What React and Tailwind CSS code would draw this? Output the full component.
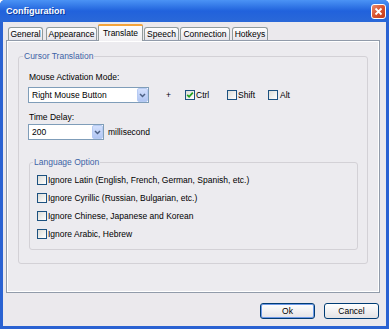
import React from 'react';

const Checkbox = ({ checked }) => (
  <span className="w-[10px] h-[10px] border border-[#1c5180] bg-gradient-to-br from-[#dcdcd7] to-white flex items-center justify-center shrink-0">
    {checked && (
      <svg width="8" height="8" viewBox="0 0 8 8">
        <path d="M1.2 3.8 L3.1 5.8 L6.8 1.6" stroke="#21a121" strokeWidth="1.7" fill="none" />
      </svg>
    )}
  </span>
);

const DropArrow = () => (
  <span className="w-[11px] h-[14px] rounded-[2px] border border-[#b7cbf3] bg-gradient-to-b from-[#d3e0fd] to-[#b1c6f3] flex items-center justify-center shrink-0">
    <svg width="7" height="5" viewBox="0 0 7 5">
      <path d="M1 1 L3.5 3.5 L6 1" stroke="#4d6185" strokeWidth="1.5" fill="none" />
    </svg>
  </span>
);

const Tab = ({ label, className }) => (
  <div className={`h-[13px] border border-b-0 border-[#919b9c] rounded-t-[3px] bg-gradient-to-b from-white to-[#e6e4ea] flex items-center justify-center ${className}`}>
    {label}
  </div>
);

const LangRow = ({ label }) => (
  <div className="h-[18px] flex items-center">
    <Checkbox />
    <span className="ml-[1px]">{label}</span>
  </div>
);

export default function App() {
  return (
    <div className="w-[389px] h-[329px] bg-[#2a62d2] rounded-t-[5px] flex flex-col font-['Liberation_Sans',Arial,sans-serif] text-[8.5px] leading-[12px] text-black overflow-hidden">
      {/* Title bar */}
      <div className="h-[22px] shrink-0 bg-gradient-to-b from-[#4b93f5] via-[#2162dc] to-[#2a68d8] flex items-center justify-between pl-[6px] pr-[3px]">
        <span className="text-white font-bold text-[9px] [text-shadow:1px_1px_0_#0b3a9c]">Configuration</span>
        <div className="w-[15px] h-[15px] rounded-[3px] border border-white bg-gradient-to-br from-[#ec8a6c] via-[#d8532f] to-[#c23a1b] flex items-center justify-center">
          <svg width="9" height="9" viewBox="0 0 9 9">
            <path d="M1.5 1.5 L7.5 7.5 M7.5 1.5 L1.5 7.5" stroke="white" strokeWidth="1.8" />
          </svg>
        </div>
      </div>

      {/* Body */}
      <div className="mx-[3px] mb-[3px] flex-1 bg-[#ebe9ed] flex flex-col pt-[2px]">
        {/* Tabs */}
        <div className="h-[16px] ml-[5px] flex items-end">
          <Tab label="General" className="w-[35px]" />
          <Tab label="Appearance" className="w-[51px] ml-[3px]" />
          <div className="w-[45px] h-[17px] ml-[1px] -mb-[1px] relative z-10 border-x border-[#919b9c] rounded-t-[3px] bg-gradient-to-b from-white to-[#f1f0f3] flex flex-col">
            <div className="h-[2px] rounded-t-[2px] bg-[#f4a43b] -mx-[1px]" />
            <div className="flex-1 flex items-center justify-center pb-[1px]">Translate</div>
          </div>
          <Tab label="Speech" className="w-[35px] ml-[1px]" />
          <Tab label="Connection" className="w-[50px] ml-[1px]" />
          <Tab label="Hotkeys" className="w-[36px] ml-[2px]" />
        </div>

        {/* Panel */}
        <div className="ml-[3px] w-[374px] h-[253px] border border-[#919baa] bg-[#ecebef] shadow-[inset_1px_1px_0_#fff,inset_-1px_-1px_0_#fff] pt-[15px] pl-[11px]">
          <div className="relative w-[350px] h-[208px] border border-[#d3d1d6] rounded-[3px] pl-[9px] pt-[14px]">
            <span className="absolute -top-[7px] left-[4px] px-[1px] bg-[#ecebef] text-[#3d63a6]">Cursor Translation</span>

            <div className="pl-[1px]">Mouse Activation Mode:</div>
            <div className="mt-[4px] h-[16px] flex items-center">
              <div className="w-[121px] h-[16px] border border-[#7f9db9] bg-white flex items-center">
                <span className="flex-1 pl-[3px]">Right Mouse Button</span>
                <DropArrow />
              </div>
              <span className="ml-[17px] w-[19px]">+</span>
              <div className="w-[42px] flex items-center">
                <Checkbox checked />
                <span className="ml-[1px]">Ctrl</span>
              </div>
              <div className="w-[41px] flex items-center">
                <Checkbox />
                <span className="ml-[1px]">Shift</span>
              </div>
              <div className="flex items-center">
                <Checkbox />
                <span className="ml-[2px]">Alt</span>
              </div>
            </div>

            <div className="mt-[8px] pl-[1px]">Time Delay:</div>
            <div className="mt-[1px] h-[16px] flex items-center">
              <div className="w-[76px] h-[16px] border border-[#7f9db9] bg-white flex items-center">
                <span className="flex-1 pl-[3px]">200</span>
                <DropArrow />
              </div>
              <span className="ml-[4px]">millisecond</span>
            </div>

            <div className="relative mt-[22px] ml-[1px] w-[329px] h-[88px] border border-[#d3d1d6] rounded-[3px] pl-[7px] pt-[8px]">
              <span className="absolute -top-[7px] left-[3px] px-[1px] bg-[#ecebef] text-[#3d63a6]">Language Option</span>
              <LangRow label="Ignore Latin (English, French, German, Spanish, etc.)" />
              <LangRow label="Ignore Cyrillic (Russian, Bulgarian, etc.)" />
              <LangRow label="Ignore Chinese, Japanese and Korean" />
              <LangRow label="Ignore Arabic, Hebrew" />
            </div>
          </div>
        </div>

        {/* Buttons */}
        <div className="mt-[10px] mr-[7px] flex justify-end gap-[9px]">
          <button className="w-[55px] h-[16px] rounded-[3px] border border-[#003c74] bg-gradient-to-b from-white to-[#e3e3e6] shadow-[inset_0_0_0_1px_#6e9ae8] flex items-center justify-center">
            Ok
          </button>
          <button className="w-[55px] h-[16px] rounded-[3px] border border-[#003c74] bg-gradient-to-b from-white to-[#e3e3e6] flex items-center justify-center">
            Cancel
          </button>
        </div>
      </div>
    </div>
  );
}
